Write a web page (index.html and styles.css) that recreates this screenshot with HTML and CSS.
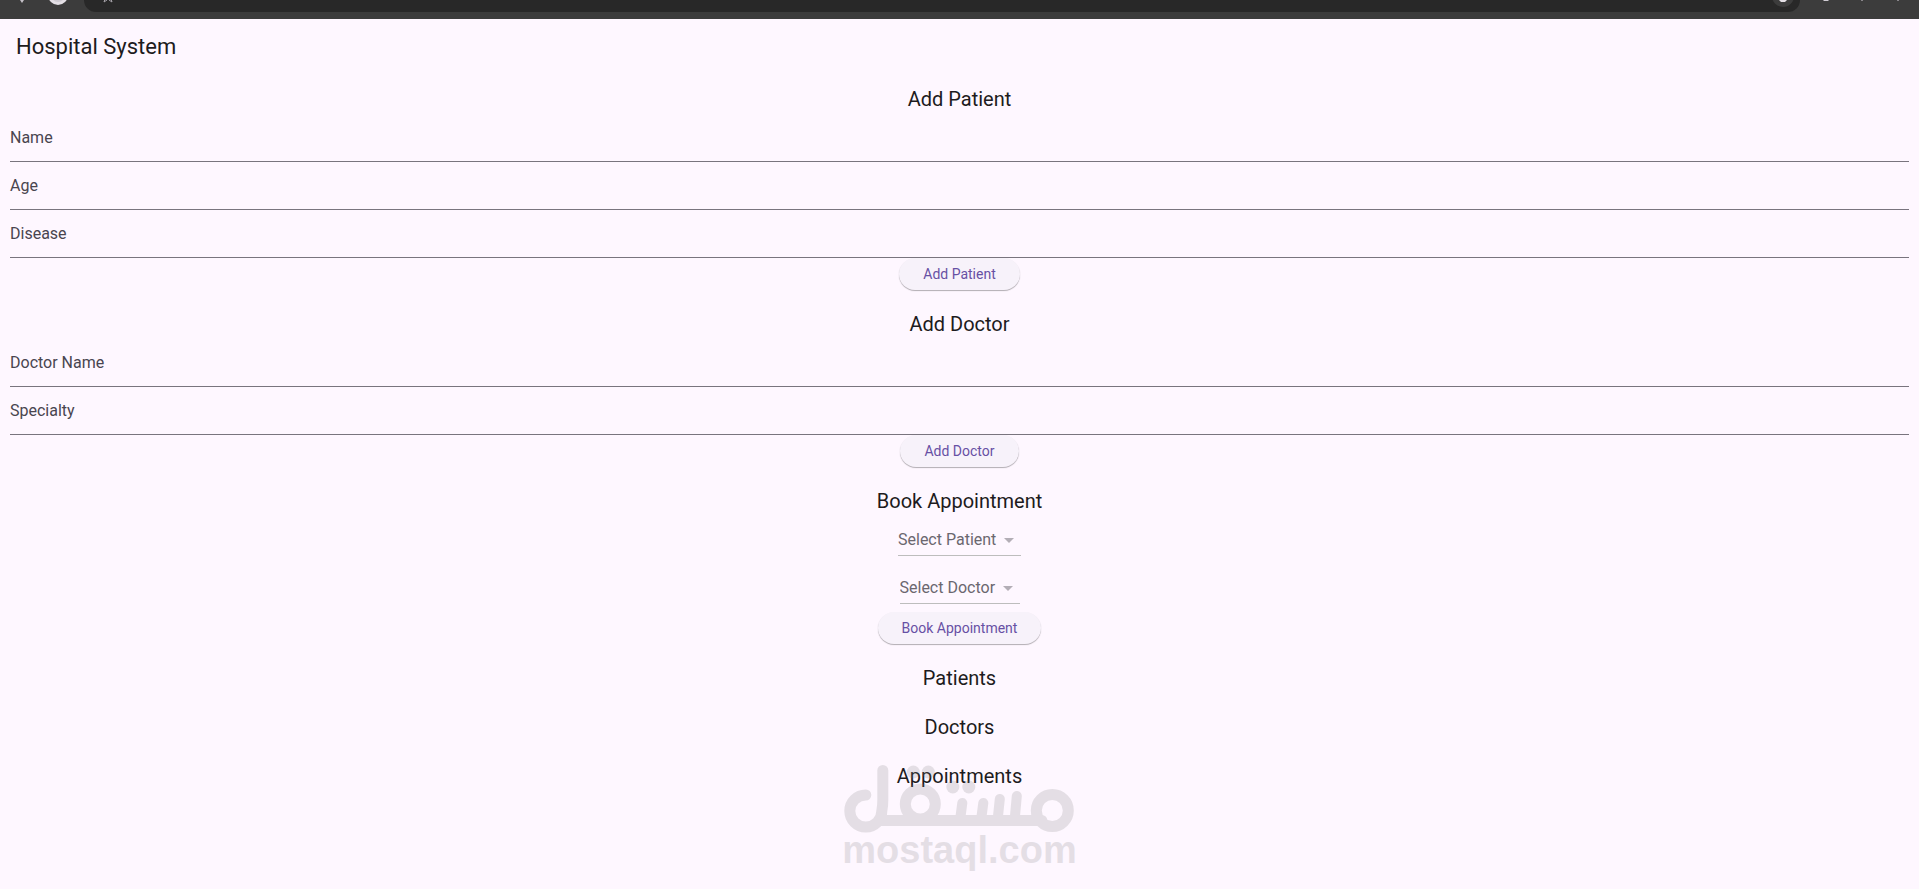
FILE: index.html
```html
<!DOCTYPE html>
<html lang="en">
<head>
<meta charset="utf-8">
<title>Hospital System</title>
<link rel="stylesheet" href="styles.css">
</head>
<body>
<div class="browser-bar">
  <svg class="browser-icons" width="72" height="19" viewBox="0 0 72 19" aria-hidden="true">
    <path d="M20 0h4l-2 3z" fill="#c5c1c8"/>
    <circle cx="58" cy="-5" r="10" fill="#e4e0e6"/>
    <circle cx="58" cy="-5" r="7" fill="#cfcbd2"/>
  </svg>
  <div class="address">
    <svg width="24" height="13" viewBox="0 0 24 13" aria-hidden="true"><path d="M4 2l1-3M7 0l-3 2M12 2l-1-3M9 0l3 2" stroke="#a5a1a8" stroke-width="1" fill="none"/></svg>
    <svg width="32" height="13" viewBox="0 0 32 13" aria-hidden="true"><circle cx="15" cy="-4" r="11" fill="#3c3c3c"/><path d="M11 0h8l-2 2h-4z" fill="#e4e0e6"/></svg>
  </div>
  <svg class="browser-icons" width="119" height="19" viewBox="0 0 119 19" aria-hidden="true">
    <path d="M23 0h6l-1 1h-4z" fill="#d0ccd3"/>
    <path d="M61 0h2v1h-2zM97 0h2v1h-2z" fill="#88858a"/>
  </svg>
</div>
<header class="app-bar"><h1 class="app-title">Hospital System</h1></header>
<main class="content">
  <form class="section">
    <h2 class="heading">Add Patient</h2>
    <div class="field"><label class="field-label" for="name">Name</label><input class="field-input" id="name" type="text"></div>
    <div class="field"><label class="field-label" for="age">Age</label><input class="field-input" id="age" type="text"></div>
    <div class="field"><label class="field-label" for="disease">Disease</label><input class="field-input" id="disease" type="text"></div>
    <button class="button" type="button">Add Patient</button>
  </form>
  <form class="section">
    <h2 class="heading">Add Doctor</h2>
    <div class="field"><label class="field-label" for="doctor-name">Doctor Name</label><input class="field-input" id="doctor-name" type="text"></div>
    <div class="field"><label class="field-label" for="specialty">Specialty</label><input class="field-input" id="specialty" type="text"></div>
    <button class="button" type="button">Add Doctor</button>
  </form>
  <form class="section">
    <h2 class="heading">Book Appointment</h2>
    <div class="picker">
      <select class="picker-select" aria-label="Select Patient"><option>Select Patient</option></select>
      <svg class="picker-arrow" width="24" height="24" viewBox="0 0 24 24" aria-hidden="true"><path d="M7 10l5 5 5-5z"/></svg>
    </div>
    <div class="picker">
      <select class="picker-select" aria-label="Select Doctor"><option>Select Doctor</option></select>
      <svg class="picker-arrow" width="24" height="24" viewBox="0 0 24 24" aria-hidden="true"><path d="M7 10l5 5 5-5z"/></svg>
    </div>
    <button class="button" type="button">Book Appointment</button>
  </form>
  <section class="section"><h2 class="heading">Patients</h2></section>
  <section class="section"><h2 class="heading">Doctors</h2></section>
  <section class="section"><h2 class="heading">Appointments</h2></section>
</main>
<div class="watermark">
  <svg width="231" height="70" viewBox="844 764 231 70" aria-hidden="true">
    <g fill="none" stroke="#808080" stroke-width="11" stroke-linecap="round">
      <path d="M866 795A16 16 0 1 0 882 811Q883 806 883 800V770.500"/>
      <path d="M880 820.500H1042"/>
      <circle cx="920.500" cy="804" r="15"/>
      <circle cx="1052.500" cy="810.500" r="16"/>
      <path stroke-width="10" d="M962.500 803l-2 15M983.500 803l-2 15M1000 799l-2 19M1017 796l-2 22"/>
    </g>
    <g fill="#808080">
      <circle cx="913.500" cy="772" r="6.500"/><circle cx="928.500" cy="772" r="6.500"/>
      <circle cx="953" cy="787" r="6.500"/><circle cx="969" cy="787" r="6.500"/>
    </g>
  </svg>
  <span class="watermark-text">mostaql.com</span>
</div>
</body>
</html>
```
FILE: styles.css
```css
* { box-sizing: border-box; }
body {
  margin: 0;
  min-height: 100vh;
  background: #fef7ff;
  color: #1d1b20;
  font-family: Roboto, "Liberation Sans", sans-serif;
}
.browser-bar { display: flex; align-items: flex-start; height: 19px; background: #3c3c3c; }
.browser-icons { flex: none; margin-right: 12px; }
.browser-icons:last-child { margin-right: 0; }
.address {
  flex: 1;
  display: flex;
  justify-content: space-between;
  height: 12px;
  padding-left: 16px;
  border-radius: 0 0 16px 16px;
  background: #282828;
}
.app-bar { display: flex; align-items: center; height: 56px; padding: 0 16px; }
.app-title { margin: 0; font-size: 22px; line-height: 28px; font-weight: 400; }
.content { display: flex; flex-direction: column; gap: 20px; padding: 10px; }
.section { display: flex; flex-direction: column; align-items: center; }
.heading { margin: 0; font-size: 20px; line-height: 29px; font-weight: 400; }
.field { display: grid; align-self: stretch; height: 48px; border-bottom: 1px solid #79747e; }
.field-label, .field-input { grid-area: 1 / 1; font-size: 16px; line-height: 24px; }
.field-label { align-self: center; color: #49454f; }
.field-input { width: 100%; padding: 0; border: 0; outline: 0; background: transparent; font-family: inherit; color: #1d1b20; }
.button {
  height: 32px;
  padding: 0 24px;
  border: 0;
  border-radius: 16px;
  background: #f7f2fa;
  box-shadow: 0 1px 1px rgba(0, 0, 0, 0.3);
  color: #6750a4;
  font-family: inherit;
  font-size: 14px;
  line-height: 20px;
  font-weight: 400;
}
.picker { display: grid; align-items: center; height: 40px; margin-bottom: 8px; padding-top: 8px; border-bottom: 1px solid #bdbdbd; }
.picker-select {
  grid-area: 1 / 1;
  appearance: none;
  padding: 0 24px 0 0;
  border: 0;
  background: transparent;
  color: #6b676f;
  font-family: inherit;
  font-size: 16px;
  line-height: 24px;
}
.picker-arrow { grid-area: 1 / 1; justify-self: end; fill: #b3aeb6; pointer-events: none; }
.watermark {
  position: absolute;
  left: 50%;
  top: 764px;
  display: grid;
  justify-items: center;
  transform: translateX(-50%);
  opacity: 0.2;
  pointer-events: none;
}
.watermark-text { font-family: "Liberation Sans", sans-serif; font-weight: 700; font-size: 38px; line-height: 32px; color: #808080; }
```
